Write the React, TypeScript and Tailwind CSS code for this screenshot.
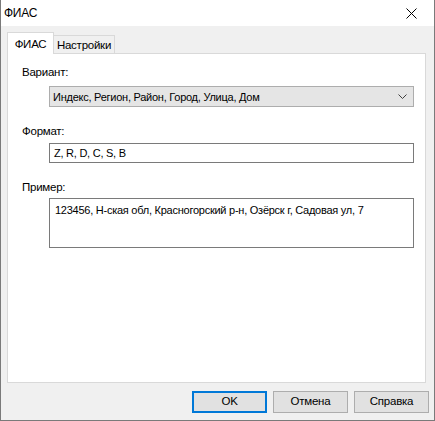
const FONT = "font-['Liberation_Sans',sans-serif]"

function DialogButton({ label, primary }: { label: string; primary?: boolean }) {
  return (
    <button
      type="button"
      className={
        'h-[22px] w-[75px] bg-[#e1e1e1] text-[11.5px] leading-none text-black ' +
        (primary ? 'border-2 border-[#0078d7]' : 'border border-[#adadad]')
      }
    >
      {label}
    </button>
  )
}

export default function App() {
  return (
    <div
      className={`${FONT} flex h-[421px] w-[435px] flex-col border-x border-b border-[#7a7a7a] bg-[#f0f0f0] text-[11px] leading-[16px] tracking-[-0.25px] text-black`}
    >
      {/* title bar */}
      <div className="flex h-[26px] items-center justify-between bg-white pl-[3px]">
        <span className="text-[12px]">ФИАС</span>
        <svg width="46" height="26" viewBox="0 0 46 26" className="shrink-0">
          <path d="M18.5 8.5 L28.5 18.5 M28.5 8.5 L18.5 18.5" stroke="#000" strokeWidth="1" />
        </svg>
      </div>

      {/* tabs */}
      <div className="ml-[6px] mt-[6px] flex items-end">
        <div className="relative z-10 -mb-px flex h-[22px] w-[47px] items-center justify-center border border-b-0 border-[#d9d9d9] bg-white text-[11.5px]">
          ФИАС
        </div>
        <div className="-ml-px flex h-[18px] w-[62px] items-center justify-center border border-b-0 border-[#d9d9d9] bg-[#f0f0f0] text-[11.5px]">
          Настройки
        </div>
      </div>

      {/* panel */}
      <div className="ml-[6px] flex h-[330px] w-[419px] flex-col whitespace-nowrap border border-[#d9d9d9] bg-white pl-[14px] pr-[11px] pt-[10px]">
        <div className="text-[11.5px]">Вариант:</div>
        <div className="ml-[27px] mt-[6px] flex h-[21px] items-center justify-between border border-[#adadad] bg-[#e5e5e5] pl-[3px] pr-[5px]">
          <span>Индекс, Регион, Район, Город, Улица, Дом</span>
          <svg width="9" height="5" viewBox="0 0 9 5" className="mr-px">
            <path d="M0.5 0.5 L4.5 4.5 L8.5 0.5" fill="none" stroke="#404040" strokeWidth="1" />
          </svg>
        </div>

        <div className="mt-[16px] text-[11.5px]">Формат:</div>
        <div className="ml-[27px] mt-[4px] flex h-[20px] items-center border border-[#7a7a7a] bg-white pl-[4px]">
          Z, R, D, C, S, B
        </div>

        <div className="mt-[16px] text-[11.5px]">Пример:</div>
        <div className="ml-[27px] mt-[3px] h-[50px] border border-[#7a7a7a] bg-white pl-[5px] pt-[3px]">
          123456, Н-ская обл, Красногорский р-н, Озёрск г, Садовая ул, 7
        </div>
      </div>

      {/* buttons */}
      <div className="mr-[5px] mt-[8px] flex justify-end gap-[6px]">
        <DialogButton label="OK" primary />
        <DialogButton label="Отмена" />
        <DialogButton label="Справка" />
      </div>
    </div>
  )
}
